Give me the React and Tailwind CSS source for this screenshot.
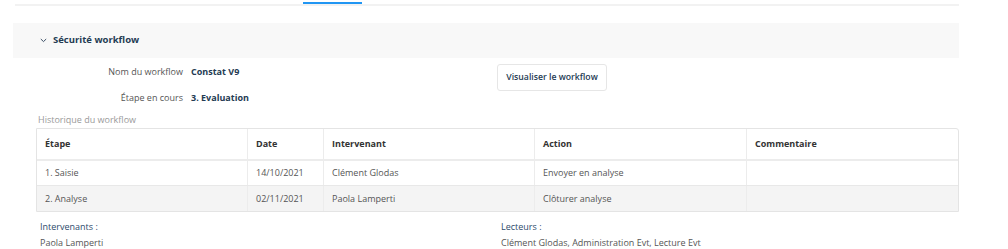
export default function App() {
  const rows = [
    { etape: "1. Saisie", date: "14/10/2021", who: "Clément Glodas", action: "Envoyer en analyse", comment: "", bg: "bg-white" },
    { etape: "2. Analyse", date: "02/11/2021", who: "Paola Lamperti", action: "Clôturer analyse", comment: "", bg: "bg-[#f4f4f4]" },
  ];

  return (
    <div className="w-[1008px] h-[249px] overflow-hidden bg-white font-['Open_Sans',sans-serif] text-[9px] text-[#555]">
      {/* onglets */}
      <div className="mt-[2px] ml-[15px] w-[944px] border-b-2 border-[#f2f2f2]">
        <div className="ml-[288px] w-[59px] h-[2px] bg-[#2196f3]" />
      </div>

      {/* entête section */}
      <div className="mt-[17px] ml-[13px] w-[946px] h-[35px] bg-[#f8f8f8] flex items-center pl-[27px]">
        <svg width="7" height="5" viewBox="0 0 7 5" className="mr-[6px]">
          <path d="M0.8 1 L3.5 3.6 L6.2 1" fill="none" stroke="#3b4f66" strokeWidth="1" />
        </svg>
        <span className="font-bold text-[#243b53] text-[9.5px]">Sécurité workflow</span>
      </div>

      {/* infos */}
      <div className="flex mt-[1px]">
        <div className="flex flex-col">
          <div className="flex h-[26px] items-center">
            <span className="w-[183px] text-right">Nom du workflow</span>
            <span className="ml-[8px] w-[306px] font-bold text-[#243b53]">Constat V9</span>
          </div>
          <div className="flex h-[26px] items-center">
            <span className="w-[183px] text-right">Étape en cours</span>
            <span className="ml-[8px] w-[306px] font-bold text-[#243b53]">3. Evaluation</span>
          </div>
        </div>
        <div className="mt-[5px]">
          <button className="w-[110px] h-[27px] border border-[#e6e6e6] rounded-[3px] bg-white font-semibold text-[8.7px] text-[#243b53]">
            Visualiser le workflow
          </button>
        </div>
      </div>

      <div className="ml-[38px] mt-[2px] h-[14px] leading-[14px] text-[#9a9a9a]">Historique du workflow</div>

      {/* tableau */}
      <div className="ml-[36px] mt-[1px] w-[923px] border border-[#e4e4e4] rounded-tr-[3px]">
        <div className="flex h-[32px] items-center border-b-2 border-[#ececec] font-bold text-[#333]">
          <div className="w-[211px] h-full flex items-center pl-[8px] border-r border-[#ececec]">Étape</div>
          <div className="w-[76px] h-full flex items-center pl-[8px] border-r border-[#ececec]">Date</div>
          <div className="w-[211px] h-full flex items-center pl-[8px] border-r border-[#ececec]">Intervenant</div>
          <div className="w-[212px] h-full flex items-center pl-[8px] border-r border-[#ececec]">Action</div>
          <div className="flex-1 h-full flex items-center pl-[8px]">Commentaire</div>
        </div>
        {rows.map((r, i) => (
          <div key={i} className={`flex h-[25px] items-center ${r.bg} ${i === 0 ? "border-b border-[#e8e8e8]" : ""}`}>
            <div className="w-[211px] h-full flex items-center pl-[8px] border-r border-[#ececec]">{r.etape}</div>
            <div className="w-[76px] h-full flex items-center pl-[8px] border-r border-[#ececec]">{r.date}</div>
            <div className="w-[211px] h-full flex items-center pl-[8px] border-r border-[#ececec]">{r.who}</div>
            <div className="w-[212px] h-full flex items-center pl-[8px] border-r border-[#ececec]">{r.action}</div>
            <div className="flex-1 h-full flex items-center pl-[8px]">{r.comment}</div>
          </div>
        ))}
      </div>

      {/* intervenants / lecteurs */}
      <div className="flex mt-[7px]">
        <div className="ml-[40px] w-[461px] flex flex-col">
          <div className="h-[16px] leading-[16px] text-[#2c4a6b]">Intervenants :</div>
          <div className="h-[16px] leading-[16px]">Paola Lamperti</div>
        </div>
        <div className="flex flex-col">
          <div className="h-[16px] leading-[16px] text-[#2c4a6b]">Lecteurs :</div>
          <div className="h-[16px] leading-[16px]">Clément Glodas, Administration Evt, Lecture Evt</div>
        </div>
      </div>
    </div>
  );
}
